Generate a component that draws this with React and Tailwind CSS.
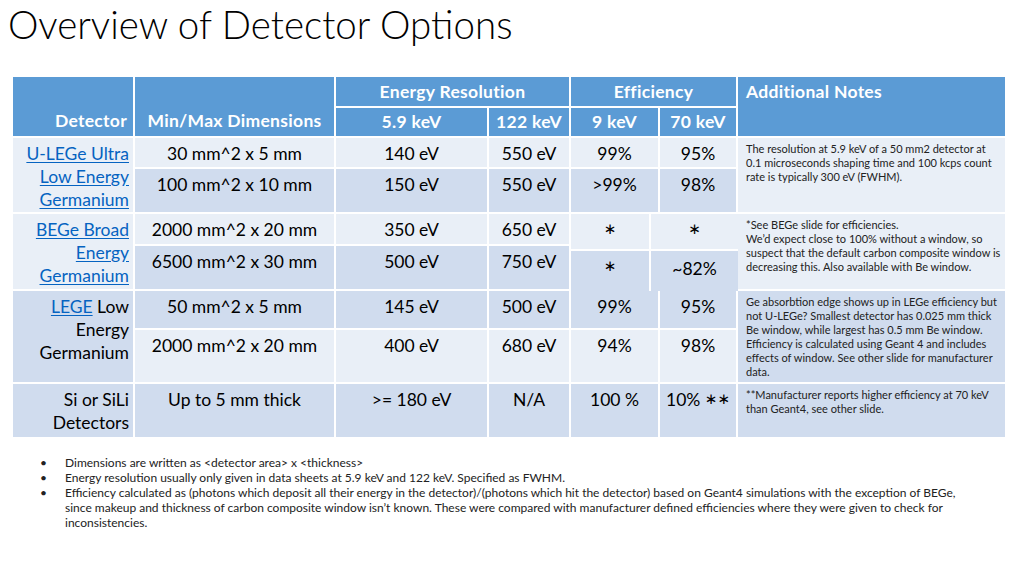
import React from "react";

const L = "bg-[#e9eff7]";
const D = "bg-[#d0dcee]";
const H = "bg-[#5b9bd5]";

function Cell({ className = "", children }) {
  return <div className={"text-[17.5px] leading-[23px] text-black text-center pt-[4px] " + className}>{children}</div>;
}

function Hd({ className = "", children }) {
  return <div className={H + " text-white font-bold text-[17.5px] tracking-[0.3px] leading-[20px] flex " + className}>{children}</div>;
}

function Note({ className = "", children }) {
  return <div className={"text-[11px] leading-[14px] text-[#222] pl-[8px] pr-[4px] pt-[4px] " + className}>{children}</div>;
}

const A = ({ children }) => <span className="text-[#0563c1] underline underline-offset-2">{children}</span>;
const Star = ({ children = "\u2217" }) => (
  <span className="text-[15px] leading-[23px] relative top-[-2px]" style={{ fontFamily: "'DejaVu Sans', sans-serif" }}>{children}</span>
);

export default function App() {
  return (
    <div className="w-[1024px] h-[576px] bg-white relative overflow-hidden" style={{ fontFamily: "Lato, 'Open Sans', sans-serif" }}>
      <h1 className="absolute left-[8px] top-[0px] text-[38.5px] leading-[48px] font-light text-black">Overview of Detector Options</h1>

      <div className="absolute left-[13px] top-[77px] grid gap-[2px] bg-white grid-cols-[120px_199px_151px_80px_87px_76px_267px] grid-rows-[29px_28px_29px_43px_30px_43px_37px_52px_53px]">
        {/* header */}
        <Hd className="col-start-1 row-start-1 row-span-2 items-end justify-end pr-[6px] pb-[5px]">Detector</Hd>
        <Hd className="col-start-2 row-start-1 row-span-2 items-end justify-center pb-[5px]">Min/Max Dimensions</Hd>
        <Hd className="col-start-3 col-span-2 row-start-1 items-center justify-center">Energy Resolution</Hd>
        <Hd className="col-start-5 col-span-2 row-start-1 items-center justify-center">Efficiency</Hd>
        <Hd className="col-start-7 row-start-1 row-span-2 items-start justify-start pl-[8px] pt-[5px]">Additional Notes</Hd>
        <Hd className="col-start-3 row-start-2 items-center justify-center">5.9 keV</Hd>
        <Hd className="col-start-4 row-start-2 items-center justify-center">122 keV</Hd>
        <Hd className="col-start-5 row-start-2 items-center justify-center">9 keV</Hd>
        <Hd className="col-start-6 row-start-2 items-center justify-center">70 keV</Hd>

        {/* U-LEGe */}
        <Cell className={L + " col-start-1 row-start-3 row-span-2 text-right pr-[4px]"}>
          <A>U-LEGe Ultra</A><br /><A>Low Energy</A><br /><A>Germanium</A>
        </Cell>
        <Cell className={L + " col-start-2 row-start-3"}>30 mm^2 x 5 mm</Cell>
        <Cell className={L + " col-start-3 row-start-3"}>140 eV</Cell>
        <Cell className={L + " col-start-4 row-start-3"}>550 eV</Cell>
        <Cell className={L + " col-start-5 row-start-3"}>99%</Cell>
        <Cell className={L + " col-start-6 row-start-3"}>95%</Cell>
        <Note className={L + " col-start-7 row-start-3 row-span-2"}>
          The resolution at 5.9 keV of a 50 mm2 detector at 0.1 microseconds shaping time and 100 kcps count rate is typically 300 eV (FWHM).
        </Note>
        <Cell className={D + " col-start-2 row-start-4"}>100 mm^2 x 10 mm</Cell>
        <Cell className={D + " col-start-3 row-start-4"}>150 eV</Cell>
        <Cell className={D + " col-start-4 row-start-4"}>550 eV</Cell>
        <Cell className={D + " col-start-5 row-start-4"}>&gt;99%</Cell>
        <Cell className={D + " col-start-6 row-start-4"}>98%</Cell>

        {/* BEGe */}
        <Cell className={L + " col-start-1 row-start-5 row-span-2 text-right pr-[4px]"}>
          <A>BEGe Broad</A><br /><A>Energy</A><br /><A>Germanium</A>
        </Cell>
        <Cell className={L + " col-start-2 row-start-5"}>2000 mm^2 x 20 mm</Cell>
        <Cell className={L + " col-start-3 row-start-5"}>350 eV</Cell>
        <Cell className={L + " col-start-4 row-start-5"}>650 eV</Cell>
        <div className="col-start-5 col-span-2 row-start-5 row-span-2 grid gap-[2px] grid-cols-[78px_87px] grid-rows-[35px_40px]">
          <Cell className={L}><Star /></Cell>
          <Cell className={L}><Star /></Cell>
          <Cell className={D + " pt-[4px]"}><Star /></Cell>
          <Cell className={D + " pt-[6px]"}>~82%</Cell>
        </div>
        <Note className={L + " col-start-7 row-start-5 row-span-2"}>
          *See BEGe slide for efficiencies.<br />
          We’d expect close to 100% without a window, so suspect that the default carbon composite window is decreasing this. Also available with Be window.
        </Note>
        <Cell className={D + " col-start-2 row-start-6"}>6500 mm^2 x 30 mm</Cell>
        <Cell className={D + " col-start-3 row-start-6"}>500 eV</Cell>
        <Cell className={D + " col-start-4 row-start-6"}>750 eV</Cell>

        {/* LEGE */}
        <Cell className={D + " col-start-1 row-start-7 row-span-2 text-right pr-[4px]"}>
          <A>LEGE</A> Low<br />Energy<br />Germanium
        </Cell>
        <Cell className={D + " col-start-2 row-start-7"}>50 mm^2 x 5 mm</Cell>
        <Cell className={D + " col-start-3 row-start-7"}>145 eV</Cell>
        <Cell className={D + " col-start-4 row-start-7"}>500 eV</Cell>
        <Cell className={D + " col-start-5 row-start-7"}>99%</Cell>
        <Cell className={D + " col-start-6 row-start-7"}>95%</Cell>
        <Note className={D + " col-start-7 row-start-7 row-span-2 pt-[3px]"}>
          Ge absorbtion edge shows up in LEGe efficiency but not U-LEGe? Smallest detector has 0.025 mm thick Be window, while largest has 0.5 mm Be window. Efficiency is calculated using Geant 4 and includes effects of window. See other slide for manufacturer data.
        </Note>
        <Cell className={L + " col-start-2 row-start-8"}>2000 mm^2 x 20 mm</Cell>
        <Cell className={L + " col-start-3 row-start-8"}>400 eV</Cell>
        <Cell className={L + " col-start-4 row-start-8"}>680 eV</Cell>
        <Cell className={L + " col-start-5 row-start-8"}>94%</Cell>
        <Cell className={L + " col-start-6 row-start-8"}>98%</Cell>

        {/* Si */}
        <Cell className={D + " col-start-1 row-start-9 text-right pr-[4px]"}>Si or SiLi<br />Detectors</Cell>
        <Cell className={D + " col-start-2 row-start-9"}>Up to 5 mm thick</Cell>
        <Cell className={D + " col-start-3 row-start-9"}>&gt;= 180 eV</Cell>
        <Cell className={D + " col-start-4 row-start-9"}>N/A</Cell>
        <Cell className={D + " col-start-5 row-start-9"}>100 %</Cell>
        <Cell className={D + " col-start-6 row-start-9"}>10% <Star>{"\u2217\u2217"}</Star></Cell>
        <Note className={D + " col-start-7 row-start-9"}>
          **Manufacturer reports higher efficiency at 70 keV than Geant4, see other slide.
        </Note>
      </div>

      <ul className="absolute left-[40px] top-[455px] w-[960px] text-[12px] leading-[15px] text-[#222]">
        <li className="flex">
          <span className="w-[25px] shrink-0">•</span>
          <span>Dimensions are written as &lt;detector area&gt; x &lt;thickness&gt;</span>
        </li>
        <li className="flex">
          <span className="w-[25px] shrink-0">•</span>
          <span>Energy resolution usually only given in data sheets at 5.9 keV and 122 keV. Specified as FWHM.</span>
        </li>
        <li className="flex">
          <span className="w-[25px] shrink-0">•</span>
          <span>
            Efficiency calculated as (photons which deposit all their energy in the detector)/(photons which hit the detector) based on Geant4 simulations with the exception of BEGe,<br />
            since makeup and thickness of carbon composite window isn’t known. These were compared with manufacturer defined efficiencies where they were given to check for<br />
            inconsistencies.
          </span>
        </li>
      </ul>
    </div>
  );
}
